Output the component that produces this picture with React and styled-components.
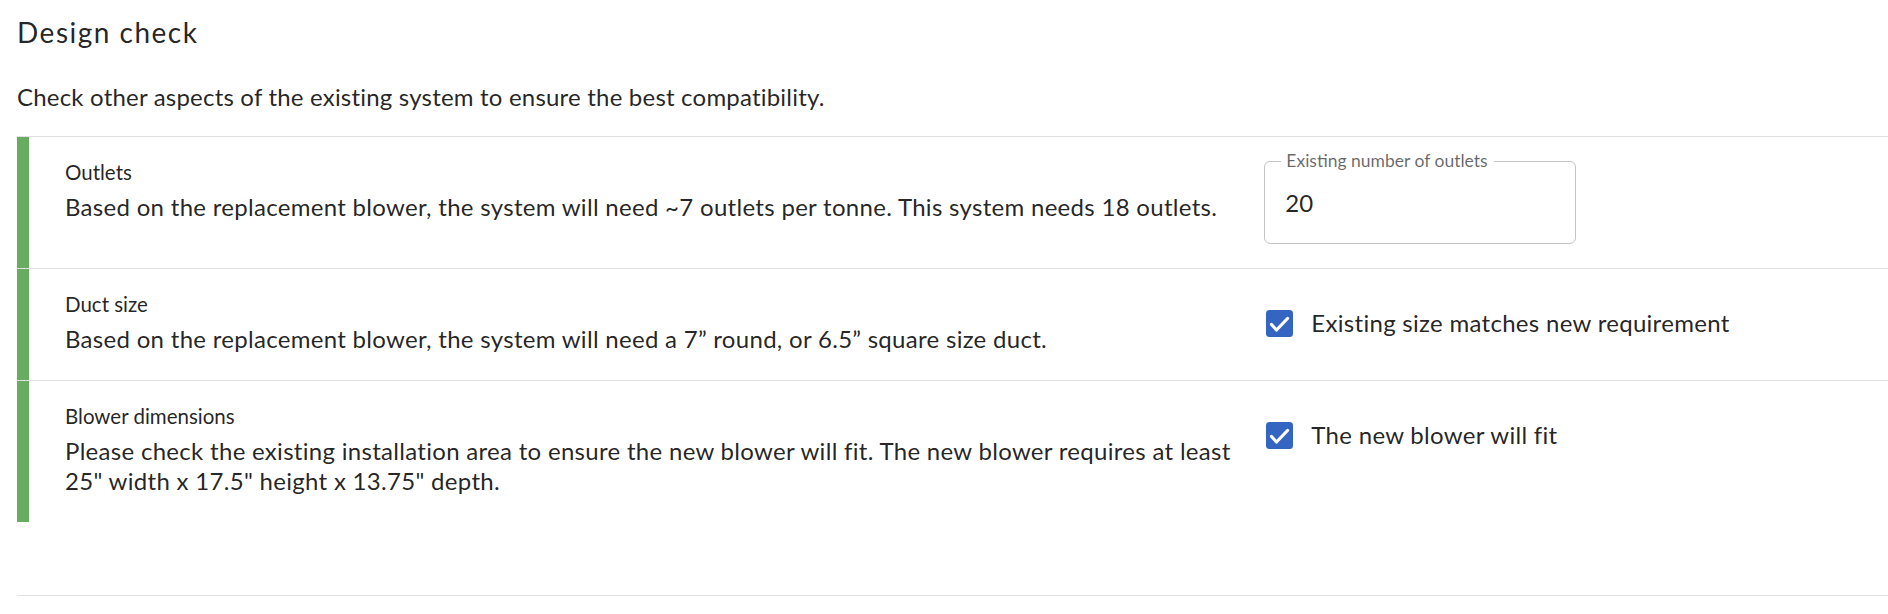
import React from "react";
import styled, { createGlobalStyle } from "styled-components";

const GlobalStyle = createGlobalStyle`
  body {
    margin: 0;
    background: #ffffff;
    font-family: Lato, "Open Sans", sans-serif;
    color: rgba(0, 0, 0, 0.87);
  }
`;

const Page = styled.div`
  padding: 0 0 18px 17px;
`;

const Title = styled.h2`
  margin: 0;
  padding-top: 14px;
  font-size: 28px;
  line-height: 36px;
  font-weight: 400;
  letter-spacing: 1.5px;
`;

const Intro = styled.p`
  margin: 32px 0 0;
  font-size: 24px;
  line-height: 30px;
  letter-spacing: 0.2px;
`;

const List = styled.div`
  margin-top: 24px;
  display: flex;
  flex-direction: column;
`;

const Row = styled.div`
  border-top: 1px solid #e0e0e0;
`;

const Card = styled.div`
  display: grid;
  grid-template-columns: calc((100% + 12px) * 2 / 3 - 12px) 1fr;
  border-left: 12px solid #67ad5f;
`;

const Info = styled.div`
  padding: 21px 24px 26px 36px;
`;

const Label = styled.div`
  font-size: 20.5px;
  line-height: 28px;
`;

const Body = styled.div`
  margin-top: 6px;
  font-size: 24px;
  line-height: 30px;
  letter-spacing: 0.3px;
`;

const Control = styled.div`
  padding: 14px 0 24px;
`;

const Field = styled.fieldset`
  margin: 0;
  width: 312px;
  height: 93px;
  box-sizing: border-box;
  padding: 0 20px;
  border: 1px solid #c4c4c4;
  border-radius: 6px;
  display: flex;
  align-items: center;
`;

const Legend = styled.legend`
  margin-left: -4px;
  padding: 0 6px 0 5px;
  font-size: 17.5px;
  line-height: 20px;
  color: rgba(0, 0, 0, 0.6);
`;

const Input = styled.input`
  border: none;
  outline: none;
  padding: 0;
  margin-top: -9px;
  width: 100%;
  font: inherit;
  font-size: 24px;
  line-height: 30px;
  color: rgba(0, 0, 0, 0.87);
  background: transparent;
`;

const CheckLabel = styled.label`
  display: flex;
  align-items: center;
  gap: 18px;
  padding: 25px 0 0 2px;
  font-size: 24px;
  line-height: 30px;
  letter-spacing: 0.3px;
`;

const Box = styled.svg`
  flex: none;
  width: 27px;
  height: 27px;
`;

const Divider = styled.div`
  margin-top: 73px;
  border-top: 1px solid #e0e0e0;
`;

const CheckIcon = () => (
  <Box viewBox="0 0 27 27">
    <rect x="0" y="0" width="27" height="27" rx="3.5" fill="#3465c0" />
    <polyline
      points="5.5,14.5 10.5,20 21.5,8.5"
      fill="none"
      stroke="#ffffff"
      strokeWidth="3.2"
      strokeLinecap="round"
      strokeLinejoin="round"
    />
  </Box>
);

const checks = [
  {
    title: "Outlets",
    text: "Based on the replacement blower, the system will need ~7 outlets per tonne. This system needs 18 outlets.",
    field: { label: "Existing number of outlets", value: "20" },
  },
  {
    title: "Duct size",
    text: "Based on the replacement blower, the system will need a 7\u201d round, or 6.5\u201d square size duct.",
    check: "Existing size matches new requirement",
  },
  {
    title: "Blower dimensions",
    text: 'Please check the existing installation area to ensure the new blower will fit. The new blower requires at least 25" width x 17.5" height x 13.75" depth.',
    check: "The new blower will fit",
  },
];

const App = () => {
  return (
    <Page>
      <GlobalStyle />
      <Title>Design check</Title>
      <Intro>Check other aspects of the existing system to ensure the best compatibility.</Intro>
      <List>
        {checks.map((item) => (
          <Row key={item.title}>
            <Card>
              <Info>
                <Label>{item.title}</Label>
                <Body>{item.text}</Body>
              </Info>
              <Control>
                {item.field ? (
                  <Field>
                    <Legend>{item.field.label}</Legend>
                    <Input defaultValue={item.field.value} />
                  </Field>
                ) : (
                  <CheckLabel>
                    <CheckIcon />
                    {item.check}
                  </CheckLabel>
                )}
              </Control>
            </Card>
          </Row>
        ))}
      </List>
      <Divider />
    </Page>
  );
};

export default App;
